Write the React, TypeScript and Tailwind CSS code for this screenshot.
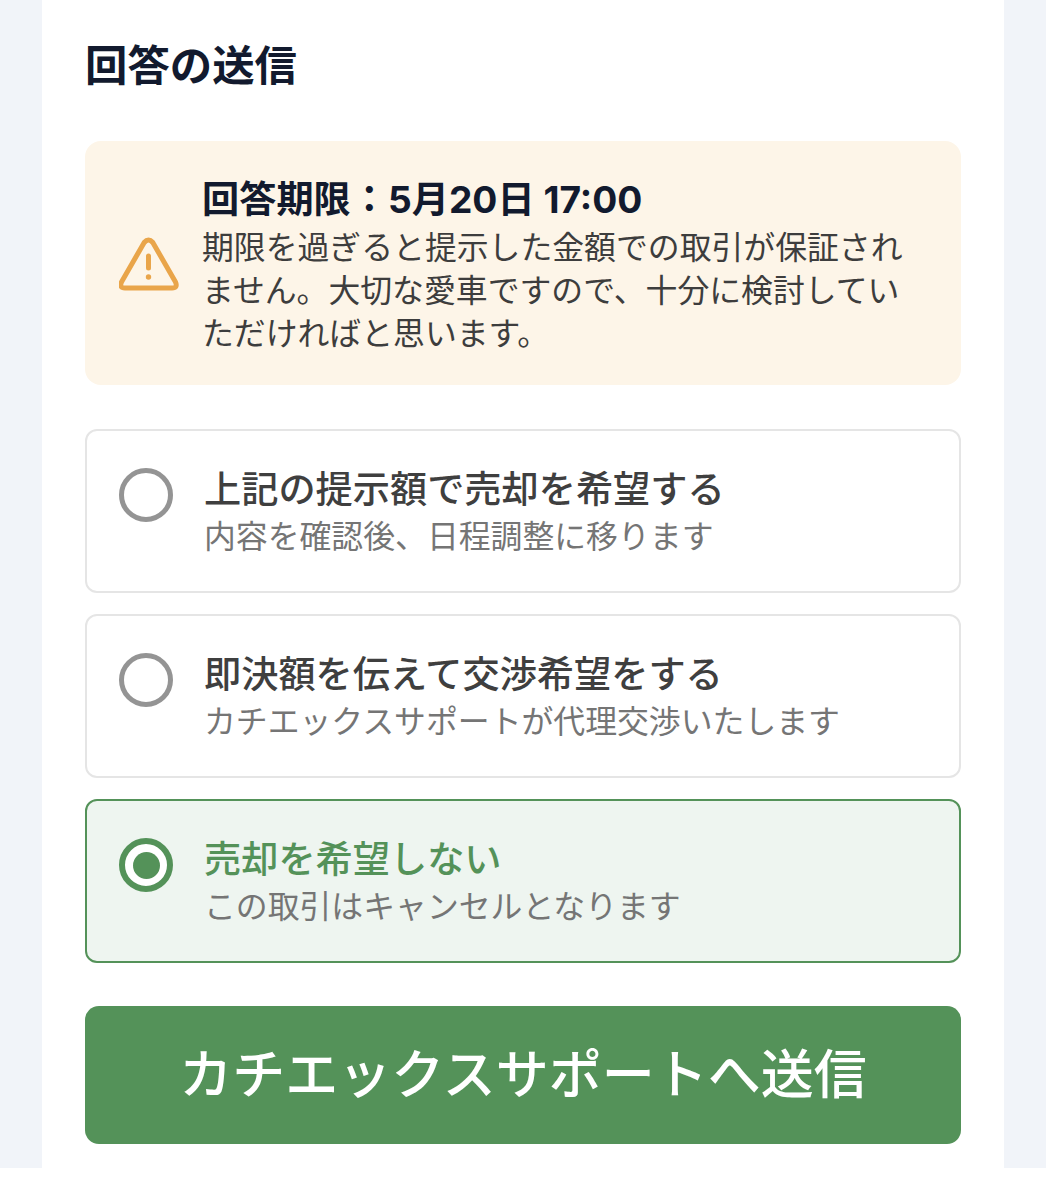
import React from "react";

const cjk = { fontFamily: '"Inter", "Noto Sans CJK JP", sans-serif' };

type OptionProps = { title: string; note: string; selected?: boolean };

// One radio card in the answer list
function Option({ title, note, selected }: OptionProps) {
  return (
    <div
      className={
        selected
          ? "flex h-[164px] items-start rounded-[12px] border-2 border-[#549259] bg-[#eef5f0] pl-[32px] pt-[37px]"
          : "flex h-[164px] items-start rounded-[12px] border-2 border-[#e5e5e5] bg-white pl-[32px] pt-[37px]"
      }
    >
      <span
        className={
          selected
            ? "flex h-[54px] w-[54px] shrink-0 items-center justify-center rounded-full border-[6px] border-[#549259] bg-white"
            : "flex h-[54px] w-[54px] shrink-0 items-center justify-center rounded-full border-[5px] border-[#949494]"
        }
      >
        {selected && <span className="h-[27px] w-[27px] rounded-full bg-[#549259]" />}
      </span>
      <div className="ml-[31px]">
        <div
          className={
            selected
              ? "-mt-[3px] text-[37.2px] leading-[49px] font-medium text-[#549259]"
              : "-mt-[3px] text-[37.2px] leading-[49px] font-medium text-[#3f3f3f]"
          }
        >
          {title}
        </div>
        <div className="text-[31.85px] leading-[46px] text-[#757575]">{note}</div>
      </div>
    </div>
  );
}

export default function App() {
  return (
    <div className="h-[1200px] w-[1046px] overflow-hidden bg-white" style={cjk}>
      <div className="h-[1168px] bg-[#f1f4f9] px-[42px]">
        <div className="h-full bg-white px-[43px] pt-[38px]">
          <h2 className="text-[42.4px] leading-[56px] font-bold text-[#121a2e]">回答の送信</h2>

          <div className="mt-[47px] flex h-[244px] items-center rounded-[16px] bg-[#fdf5e8] pl-[34px] pr-[40px]">
            <svg width="60" height="54" viewBox="0 0 60 54" fill="none" className="mt-[2px] shrink-0">
              <path
                d="M25.2 5.5 Q29.5 0.5 33.8 5.5 L56.5 45 Q59 51 53 51 H6 Q0 51 2.5 45 Z"
                stroke="#e9a54a"
                strokeWidth="5"
                strokeLinejoin="round"
              />
              <path d="M29.5 19 V31" stroke="#e9a54a" strokeWidth="5" strokeLinecap="round" />
              <circle cx="29.5" cy="40" r="2.7" fill="#e9a54a" />
            </svg>
            <div className="ml-[23px] mt-[6px]">
              <div className="text-[37.2px] leading-[44px] font-bold text-[#121a2e]">回答期限：5月20日 17:00</div>
              <p className="mt-[4px] text-[31.85px] leading-[43px] text-[#3d3d3d]">
                期限を過ぎると提示した金額での取引が保証されません。大切な愛車ですので、十分に検討していただければと思います。
              </p>
            </div>
          </div>

          <div className="mt-[44px] flex flex-col gap-[21px]">
            <Option title="上記の提示額で売却を希望する" note="内容を確認後、日程調整に移ります" />
            <Option title="即決額を伝えて交渉希望をする" note="カチエックスサポートが代理交渉いたします" />
            <Option title="売却を希望しない" note="この取引はキャンセルとなります" selected />
          </div>

          <button className="mt-[43px] flex h-[138px] w-full items-center justify-center rounded-[14px] bg-[#549259] pt-[2px] text-[53px] font-medium text-white">
            カチエックスサポートへ送信
          </button>
        </div>
      </div>
    </div>
  );
}
